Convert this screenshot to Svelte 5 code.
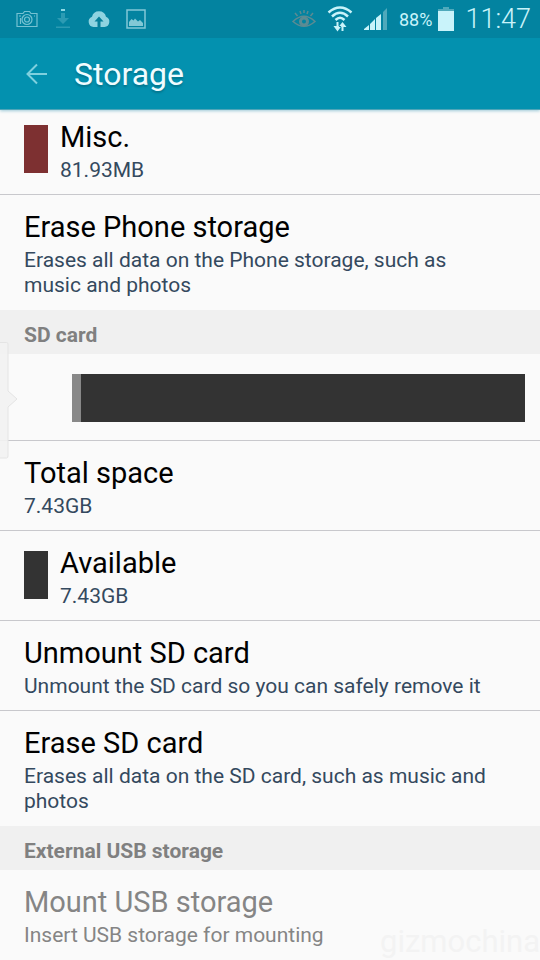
<script lang="ts">
  type Row = {
    title: string;
    summary: string;
    color?: string;
    action?: boolean;
    disabled?: boolean;
  };

  const phone: Row[] = [
    { title: "Misc.", summary: "81.93MB", color: "#7d3031" },
    {
      title: "Erase Phone storage",
      summary: "Erases all data on the Phone storage, such as music and photos",
      action: true,
    },
  ];

  const sdCard: Row[] = [
    { title: "Total space", summary: "7.43GB" },
    { title: "Available", summary: "7.43GB", color: "#333333" },
    {
      title: "Unmount SD card",
      summary: "Unmount the SD card so you can safely remove it",
      action: true,
    },
    {
      title: "Erase SD card",
      summary: "Erases all data on the SD card, such as music and photos",
      action: true,
    },
  ];

  const usb: Row[] = [
    {
      title: "Mount USB storage",
      summary: "Insert USB storage for mounting",
      action: true,
      disabled: true,
    },
  ];

  const usedPercent = 2;
</script>

{#snippet content(row: Row)}
  {#if row.color}
    <span class="swatch" style:background={row.color}></span>
  {/if}
  <span class="text">
    <span class="title">{row.title}</span>
    <span class="summary">{row.summary}</span>
  </span>
{/snippet}

{#snippet list(rows: Row[])}
  <ul>
    {#each rows as row}
      <li>
        {#if row.action}
          <button type="button" class="row" disabled={row.disabled}>
            {@render content(row)}
          </button>
        {:else}
          <div class="row">{@render content(row)}</div>
        {/if}
      </li>
    {/each}
  </ul>
{/snippet}

<div class="screen">
  <header>
    <div class="status">
      <div class="notifications">
        <svg width="22" height="18" viewBox="0 0 22 18" fill="none" stroke="#76c2d2" stroke-width="1.2">
          <path d="M1 3.500h6L8.500 1.500h5L15 3.500h6v13H1z" />
          <circle cx="11" cy="9.500" r="5" />
          <circle cx="11" cy="9.500" r="2.500" />
          <path d="M3 6h2M4.500 8v6M18 6h1" />
        </svg>
        <svg width="18" height="22" viewBox="-1 0 18 22" fill="#2c9bb3">
          <path d="M6 5h4v5h4l-6 6-6-6h4z" />
          <path d="M1 18.500h14v1.500H1z" />
          <path d="M6 1h4v2H6z" fill="#8ed8e4" />
        </svg>
        <svg width="22" height="18" viewBox="0 0 22 18">
          <path
            d="M5.500 17A5.300 5.300 0 0 1 4 6.800 7.200 7.200 0 0 1 18 6.800 5.300 5.300 0 0 1 16.500 17z"
            fill="#8fd3e0"
          />
          <path d="M11 6.500l4.500 5h-3V17h-3v-5.500h-3z" fill="#067f99" />
        </svg>
        <svg width="20" height="20" viewBox="0 0 20 20">
          <path d="M1 1h18v18H1z" fill="none" stroke="#82c8d6" stroke-width="1.500" />
          <path d="M3 17v-4l2.500-3 2 1.500 1.500-2 3 3 2-1.500 3 3v3z" fill="#82c8d6" />
        </svg>
      </div>
      <div class="system">
        <svg width="24" height="20" viewBox="0 0 24 20" fill="none" stroke="#5c8b93" stroke-width="1.500">
          <path d="M1 12.500Q12 2 23 12.500 12 22 1 12.500z" />
          <circle cx="12" cy="12.500" r="3.500" stroke-width="3" />
          <path d="M3 4l2.500 3M8 2l1 3M12 1v3M16 2l-1 3M21 4l-2.500 3" />
        </svg>
        <svg width="26" height="26" viewBox="0 0 26 26" fill="none" stroke="#c9f3fa" stroke-width="2.500">
          <path d="M1.500 6.500Q13-3.500 24.500 6.500M5 10.500Q13 3 21 10.500M8.500 14Q13 9.500 17.500 14" />
          <path d="M10.500 16v7M15.500 25v-7" stroke-width="2" />
          <path d="M6.500 20h8l-4 5.500zM11.500 21h8l-4-5z" fill="#c9f3fa" stroke="none" />
        </svg>
        <svg width="24" height="24" viewBox="0 0 24 24" fill="#c9f3fa">
          <path d="M0 23v-1l5-4v5zM6 23v-6l5-5v11zM12 23V11l5-4v16z" />
          <path d="M19 23V5l4-4v22z" fill="#4fa9bb" />
        </svg>
        <div class="power">
          <span>88%</span>
          <svg width="16" height="24" viewBox="0 0 16 24">
            <path d="M5 0h6v2h5v3H0V2h5z" fill="#4fa9bb" />
            <path d="M0 4h16v20H0z" fill="#c9f3fa" />
          </svg>
        </div>
        <time>11:47</time>
      </div>
    </div>
    <div class="bar">
      <button type="button" class="back" aria-label="Back">
        <svg width="22" height="22" viewBox="0 0 22 22" fill="none" stroke="#7fd0de" stroke-width="2">
          <path d="M21 11H2M11 1.500L1.500 11l9.500 9.500" />
        </svg>
      </button>
      <h1>Storage</h1>
    </div>
  </header>

  <main>
    <section class="phone">{@render list(phone)}</section>

    <section>
      <h2>SD card</h2>
      <div class="usage">
        <div class="meter">
          <div class="used" style:width="{usedPercent}%"></div>
        </div>
      </div>
      {@render list(sdCard)}
    </section>

    <section>
      <h2>External USB storage</h2>
      {@render list(usb)}
    </section>
  </main>

  <!-- edge handle of the multi window tray -->
  <svg class="tray" width="18" height="117" viewBox="0 0 18 117">
    <path
      d="M-1 .5H6.500Q8 .5 8 2V49l9 8-9 8v49q0 2-1.500 2H-1z"
      fill="#f2f2f2"
      fill-opacity="0.900"
      stroke="#e4e4e4"
    />
  </svg>
  <span class="watermark">gizmochina</span>
</div>

<style>
  :global(body) {
    background: #fafafa;
  }
  .screen {
    position: relative;
    min-height: 100vh;
    overflow: hidden;
    font-family: Roboto, "Noto Sans", sans-serif;
    color: #000;
    background: #fafafa;
  }
  header {
    background: #0391af;
    border-bottom: 1px solid #4fa5b8;
    box-shadow: 0 1px 3px #9fcbd8;
  }
  .status {
    display: flex;
    align-items: center;
    justify-content: space-between;
    height: 38px;
    padding: 0 9px 0 16px;
    background: #0383a0;
  }
  .notifications,
  .system,
  .power {
    display: flex;
    align-items: center;
  }
  .notifications {
    gap: 16px;
  }
  .system {
    gap: 11px;
    color: #c9f3fa;
  }
  .power {
    gap: 6px;
    font-size: 18px;
  }
  time {
    font-size: 27px;
    font-weight: 300;
  }
  .bar {
    display: flex;
    align-items: center;
    gap: 26px;
    height: 71px;
    padding: 0 26px;
  }
  .back {
    display: flex;
    padding: 0;
    border: none;
    background: none;
  }
  h1 {
    margin: 0;
    font-size: 32px;
    font-weight: 400;
    line-height: 36px;
    color: #f0fcff;
    text-shadow: 0 2px 2px #04758d;
  }
  h2 {
    margin: 0;
    padding: 13px 24px 7px;
    font-size: 21px;
    font-weight: 700;
    line-height: 24px;
    color: #808080;
    background: #f0f0f0;
  }
  ul {
    margin: 0;
    padding: 0;
    list-style: none;
  }
  li {
    border-bottom: 1px solid #c8c8cc;
  }
  li:last-child {
    border-bottom-color: transparent;
  }
  .row {
    display: flex;
    align-items: flex-start;
    gap: 12px;
    box-sizing: border-box;
    width: 100%;
    padding: 14px 36px 11px 24px;
    border: none;
    background: none;
    color: inherit;
    font-family: inherit;
    text-align: left;
  }
  /* first row sits closer to the action bar */
  .phone li:first-child .row {
    padding-top: 9px;
  }
  .swatch {
    flex: none;
    width: 24px;
    height: 48px;
    margin-top: 6px;
  }
  .text {
    display: flex;
    flex-direction: column;
    gap: 3px;
  }
  .title {
    font-size: 29px;
    line-height: 36px;
  }
  .summary {
    font-size: 21px;
    line-height: 25px;
    color: #34495e;
  }
  .row:disabled,
  .row:disabled .summary {
    color: #858585;
  }
  .usage {
    padding: 20px 15px 18px 72px;
    border-bottom: 1px solid #c8c8cc;
  }
  .meter {
    height: 48px;
    background: #333;
  }
  .used {
    height: 100%;
    background: #888;
  }
  .tray {
    position: absolute;
    top: 342px;
    left: 0;
  }
  .watermark {
    position: absolute;
    right: 0;
    bottom: 0;
    font-size: 31px;
    line-height: 36px;
    color: #f3f3f3;
  }
</style>
